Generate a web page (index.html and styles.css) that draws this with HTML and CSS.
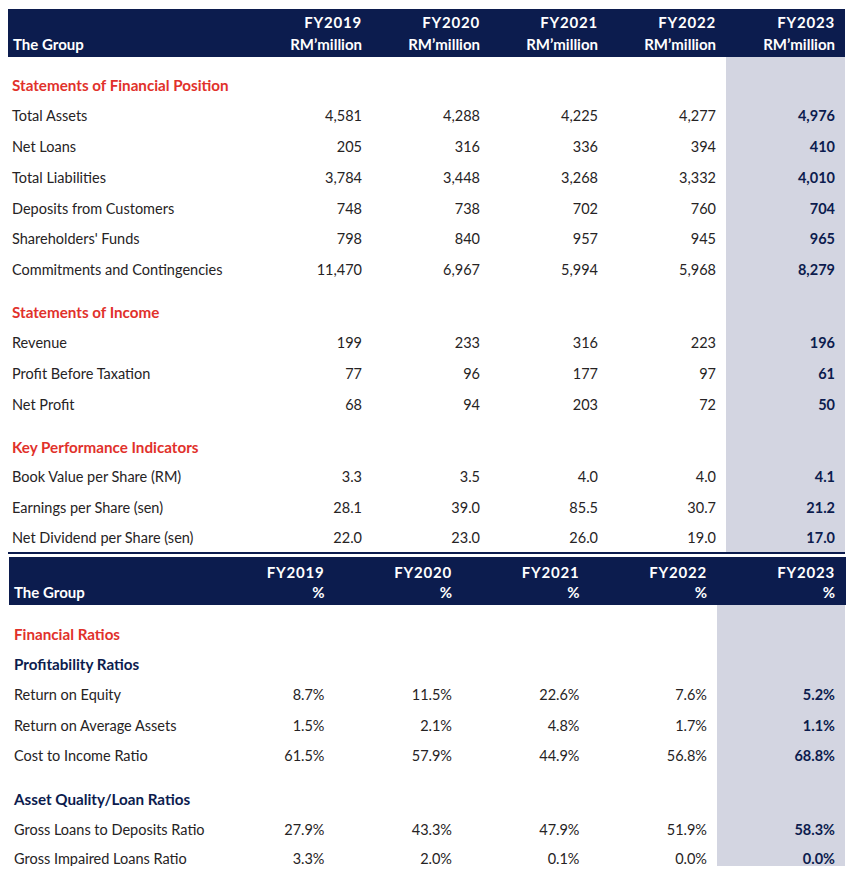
FILE: index.html
```html
<!DOCTYPE html>
<html>
<head>
<meta charset="utf-8">
<link rel="stylesheet" href="styles.css">
</head>
<body>
<div class="page">
  <section class="tbl tbl-rm">
    <div class="row head">
      <div class="c lbl">The Group</div>
      <div class="c num"><span class="fy">FY2019</span><span>RM’million</span></div>
      <div class="c num"><span class="fy">FY2020</span><span>RM’million</span></div>
      <div class="c num"><span class="fy">FY2021</span><span>RM’million</span></div>
      <div class="c num"><span class="fy">FY2022</span><span>RM’million</span></div>
      <div class="c num"><span class="fy">FY2023</span><span>RM’million</span></div>
    </div>
    <div class="row spacer top"><div class="c"></div><div class="c"></div><div class="c"></div><div class="c"></div><div class="c"></div><div class="c hl"></div></div>
    <div class="row sec"><div class="c lbl red">Statements of Financial Position</div><div class="c"></div><div class="c"></div><div class="c"></div><div class="c"></div><div class="c hl"></div></div>
    <div class="row"><div class="c lbl">Total Assets</div><div class="c num">4,581</div><div class="c num">4,288</div><div class="c num">4,225</div><div class="c num">4,277</div><div class="c num hl">4,976</div></div>
    <div class="row"><div class="c lbl">Net Loans</div><div class="c num">205</div><div class="c num">316</div><div class="c num">336</div><div class="c num">394</div><div class="c num hl">410</div></div>
    <div class="row"><div class="c lbl">Total Liabilities</div><div class="c num">3,784</div><div class="c num">3,448</div><div class="c num">3,268</div><div class="c num">3,332</div><div class="c num hl">4,010</div></div>
    <div class="row"><div class="c lbl">Deposits from Customers</div><div class="c num">748</div><div class="c num">738</div><div class="c num">702</div><div class="c num">760</div><div class="c num hl">704</div></div>
    <div class="row"><div class="c lbl">Shareholders' Funds</div><div class="c num">798</div><div class="c num">840</div><div class="c num">957</div><div class="c num">945</div><div class="c num hl">965</div></div>
    <div class="row"><div class="c lbl">Commitments and Contingencies</div><div class="c num">11,470</div><div class="c num">6,967</div><div class="c num">5,994</div><div class="c num">5,968</div><div class="c num hl">8,279</div></div>
    <div class="row spacer"><div class="c"></div><div class="c"></div><div class="c"></div><div class="c"></div><div class="c"></div><div class="c hl"></div></div>
    <div class="row sec"><div class="c lbl red">Statements of Income</div><div class="c"></div><div class="c"></div><div class="c"></div><div class="c"></div><div class="c hl"></div></div>
    <div class="row"><div class="c lbl">Revenue</div><div class="c num">199</div><div class="c num">233</div><div class="c num">316</div><div class="c num">223</div><div class="c num hl">196</div></div>
    <div class="row"><div class="c lbl">Profit Before Taxation</div><div class="c num">77</div><div class="c num">96</div><div class="c num">177</div><div class="c num">97</div><div class="c num hl">61</div></div>
    <div class="row"><div class="c lbl">Net Profit</div><div class="c num">68</div><div class="c num">94</div><div class="c num">203</div><div class="c num">72</div><div class="c num hl">50</div></div>
    <div class="row spacer"><div class="c"></div><div class="c"></div><div class="c"></div><div class="c"></div><div class="c"></div><div class="c hl"></div></div>
    <div class="row sec"><div class="c lbl red">Key Performance Indicators</div><div class="c"></div><div class="c"></div><div class="c"></div><div class="c"></div><div class="c hl"></div></div>
    <div class="row"><div class="c lbl">Book Value per Share (RM)</div><div class="c num">3.3</div><div class="c num">3.5</div><div class="c num">4.0</div><div class="c num">4.0</div><div class="c num hl">4.1</div></div>
    <div class="row"><div class="c lbl">Earnings per Share (sen)</div><div class="c num">28.1</div><div class="c num">39.0</div><div class="c num">85.5</div><div class="c num">30.7</div><div class="c num hl">21.2</div></div>
    <div class="row last"><div class="c lbl">Net Dividend per Share (sen)</div><div class="c num">22.0</div><div class="c num">23.0</div><div class="c num">26.0</div><div class="c num">19.0</div><div class="c num hl">17.0</div></div>
  </section>

  <section class="tbl tbl-pct">
    <div class="row head">
      <div class="c lbl">The Group</div>
      <div class="c num"><span class="fy">FY2019</span><span>%</span></div>
      <div class="c num"><span class="fy">FY2020</span><span>%</span></div>
      <div class="c num"><span class="fy">FY2021</span><span>%</span></div>
      <div class="c num"><span class="fy">FY2022</span><span>%</span></div>
      <div class="c num"><span class="fy">FY2023</span><span>%</span></div>
    </div>
    <div class="row spacer top"><div class="c"></div><div class="c"></div><div class="c"></div><div class="c"></div><div class="c"></div><div class="c hl"></div></div>
    <div class="row sec first"><div class="c lbl red">Financial Ratios</div><div class="c"></div><div class="c"></div><div class="c"></div><div class="c"></div><div class="c hl"></div></div>
    <div class="row sec"><div class="c lbl navy">Profitability Ratios</div><div class="c"></div><div class="c"></div><div class="c"></div><div class="c"></div><div class="c hl"></div></div>
    <div class="row"><div class="c lbl">Return on Equity</div><div class="c num">8.7%</div><div class="c num">11.5%</div><div class="c num">22.6%</div><div class="c num">7.6%</div><div class="c num hl">5.2%</div></div>
    <div class="row"><div class="c lbl">Return on Average Assets</div><div class="c num">1.5%</div><div class="c num">2.1%</div><div class="c num">4.8%</div><div class="c num">1.7%</div><div class="c num hl">1.1%</div></div>
    <div class="row"><div class="c lbl">Cost to Income Ratio</div><div class="c num">61.5%</div><div class="c num">57.9%</div><div class="c num">44.9%</div><div class="c num">56.8%</div><div class="c num hl">68.8%</div></div>
    <div class="row spacer wide"><div class="c"></div><div class="c"></div><div class="c"></div><div class="c"></div><div class="c"></div><div class="c hl"></div></div>
    <div class="row sec"><div class="c lbl navy">Asset Quality/Loan Ratios</div><div class="c"></div><div class="c"></div><div class="c"></div><div class="c"></div><div class="c hl"></div></div>
    <div class="row"><div class="c lbl">Gross Loans to Deposits Ratio</div><div class="c num">27.9%</div><div class="c num">43.3%</div><div class="c num">47.9%</div><div class="c num">51.9%</div><div class="c num hl">58.3%</div></div>
    <div class="row end"><div class="c lbl">Gross Impaired Loans Ratio</div><div class="c num">3.3%</div><div class="c num">2.0%</div><div class="c num">0.1%</div><div class="c num">0.0%</div><div class="c num hl">0.0%</div></div>
  </section>
</div>
</body>
</html>
```

FILE: styles.css
```css
* { box-sizing: border-box; }
html, body { margin: 0; padding: 0; background: #ffffff; }
body {
  font-family: Lato, "Open Sans", "Liberation Sans", sans-serif;
  font-size: 14.5px;
  color: #262324;
}
.page {
  padding: 9px 0 0 8px;
  width: 854px;
}
.tbl { width: 837px; }
.row {
  display: grid;
  height: 30.8px;
  align-items: stretch;
}
.tbl-rm .row { grid-template-columns: 246px 118px 118px 118px 118px 119px; }
.tbl-pct { margin-left: 1px; margin-top: 3px; }
.tbl-pct .row { grid-template-columns: 198px 127.5px 127.5px 127.5px 127.5px 128px; height: 30.8px; }

.c {
  display: flex;
  align-items: center;
  line-height: 20px;
  padding-top: 1px;
  white-space: nowrap;
}
.lbl { padding-left: 4px; }
.tbl-pct .lbl { padding-left: 5px; }
.num { justify-content: flex-end; padding-right: 10px; }
.hl { background: #d3d5e1; color: #0c1c4e; font-weight: 700; }

.red { color: #e1312b; font-weight: 700; font-size: 15.2px; }
.navy { color: #0c1c4e; font-weight: 700; font-size: 15.2px; }

.row.head {
  background: #0c1c4e;
  color: #ffffff;
  font-weight: 700;
  font-size: 15px;
  height: 48px;
}
.row.head .c { align-items: flex-end; padding-top: 0; padding-bottom: 2px; line-height: 22px; }
.row.head .lbl { padding-left: 5px; }
.row.head .num { flex-direction: column; align-items: flex-end; justify-content: flex-end; }
.row.head .fy { letter-spacing: 0.8px; }
.tbl-pct .row.head { height: 48px; }
.tbl-pct .row.head .c { padding-bottom: 3px; line-height: 20px; }
.tbl-pct .row.head .lbl { padding-left: 5px; }

.row.spacer { height: 11.2px; }
.row.spacer .c { padding-top: 0; }
.row.spacer.top { height: 12.6px; }
.tbl-pct .row.spacer.top { height: 13.4px; }
.tbl-pct .row.sec.first { height: 30.2px; }
.tbl-pct .row.spacer.wide { height: 12px; }

.row.last { height: 30.4px; border-bottom: 2px solid #0c1c4e; }
.tbl-pct .row.end { height: 21.6px; }
.row.end .c { padding-top: 4px; }
```
